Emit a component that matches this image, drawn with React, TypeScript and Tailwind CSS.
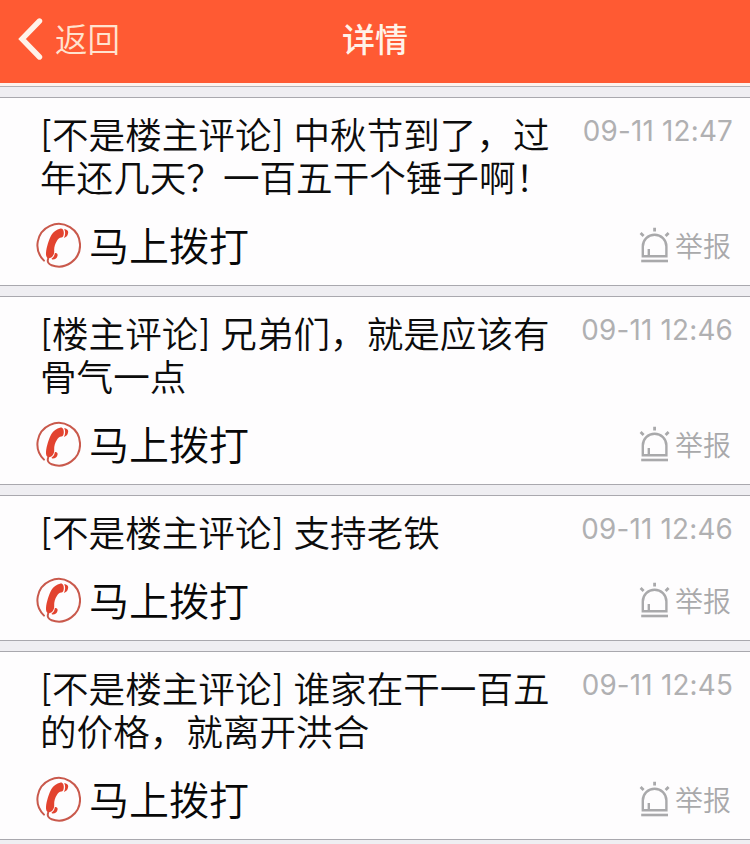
type Comment = { id: number; author: string; lines: string[]; time: string };

const comments: Comment[] = [
  { id: 1, author: '不是楼主评论', lines: ['中秋节到了，过', '年还几天？一百五干个锤子啊！'], time: '09-11 12:47' },
  { id: 2, author: '楼主评论', lines: ['兄弟们，就是应该有', '骨气一点'], time: '09-11 12:46' },
  { id: 3, author: '不是楼主评论', lines: ['支持老铁'], time: '09-11 12:46' },
  { id: 4, author: '不是楼主评论', lines: ['谁家在干一百五', '的价格，就离开洪合'], time: '09-11 12:45' },
];

function PhoneIcon() {
  return (
    <svg width="46" height="46" viewBox="0 0 46 46" fill="none">
      <path d="M9 38.6A21.3 21.3 0 1 1 16.6 43.3C13.4 42.2 12 39.6 13.2 36.6" stroke="#c9594c" strokeWidth="2" strokeLinecap="round" />
      <path
        d="M25.6 6.4C21.4 7.4 18.4 9.6 16.4 13C14 17.4 11.6 24.6 11 31C10.8 33.6 11.6 35.8 13 36.2C14.6 36.4 16.4 35.8 17.4 34.6C18.8 32.8 19.4 30.6 19.2 28.4C19 25.4 20 21.8 22 18.8C23 17.2 24.4 15.8 26.4 15.6C27.8 15.6 28.6 14 28.8 11.6C29 8.8 28 6.2 25.6 6.4Z"
        fill="#e2432f"
      />
      <path d="M29.2 7C31.8 7.2 33.4 8.8 33.2 10.6C33 13.2 31.8 15.2 29 16C30.4 12.8 30.6 9.8 29.2 7Z" fill="#e2432f" />
      <path d="M19.8 31.2C21.6 30.8 22.8 31.8 22.6 33.4C22.2 36 20 37.6 17.4 37.4C16.6 37.3 16.4 36.6 17 36.2C18.6 35.2 19.6 33.4 19.8 31.2Z" fill="#e2432f" />
    </svg>
  );
}

function AlarmIcon() {
  return (
    <svg width="32" height="36" viewBox="0 0 32 36" fill="none" stroke="#a9a9ab" strokeWidth="2.4">
      <path d="M4.8 29.2V19.4A11.8 11.6 0 0 1 28.4 19.4V29.2Z" />
      <path d="M10.8 28.5V22" />
      <path d="M3.2 34H30" strokeWidth="2.6" />
      <path d="M16.6 0.8V4.4M2.6 6L5.6 9M30.6 6L27.6 9" strokeWidth="2.8" />
    </svg>
  );
}

function Bracket({ children }: { children: string }) {
  return (
    <span className="inline-block w-[12px] align-[2px] font-['Inter',sans-serif] text-[36px] leading-none font-[350]">
      {children}
    </span>
  );
}

function CommentCard({ comment }: { comment: Comment }) {
  return (
    <article className="border-y border-[#a9a8ae] bg-[#fefdfe]">
      <div className="flex items-start justify-between pt-[14px] pr-[17px] pl-[40px]">
        <h2 className="text-[36.6px] font-[350] whitespace-pre text-[#0c0c0c]">
          {comment.lines.map((line, i) => (
            <span key={line} className="block h-[43px] leading-[43px]">
              {i === 0 && (
                <span className="mr-[10px]">
                  <Bracket>[</Bracket>
                  {comment.author}
                  <Bracket>]</Bracket>
                </span>
              )}
              {line}
            </span>
          ))}
        </h2>
        <time className="pt-[3px] font-['Inter','Liberation_Sans',sans-serif] text-[27.8px] leading-[32px] font-normal tracking-[0.2px] whitespace-nowrap text-[#b0b0b2]">
          {comment.time}
        </time>
      </div>
      <div className="mt-[24px] flex h-[63px] items-start justify-between pr-[19px] pl-[35px]">
        <button className="flex items-center gap-[8px] text-[40px] leading-[44px] font-[350] text-[#080808]">
          <PhoneIcon />
          <span className="pb-[2px]">马上拨打</span>
        </button>
        <button className="mt-[5px] flex items-center gap-[5px] text-[28px] leading-[36px] font-[350] text-[#a9a9ab]">
          <AlarmIcon />
          <span>举报</span>
        </button>
      </div>
    </article>
  );
}

export default function App() {
  return (
    <div className="h-[844px] w-[750px] overflow-hidden bg-[#efeef2] font-['Noto_Sans_CJK_SC',sans-serif]">
      <header className="grid h-[83px] grid-cols-3 items-center bg-[#ff5a33] pb-[6px]">
        <button className="flex items-center gap-[12px] pl-[18px] text-[32.5px] leading-[42px] font-[350] text-[#ffe3cf]">
          <svg width="25" height="42" viewBox="0 0 25 42" fill="none" stroke="#fff3e9" strokeWidth="5.4" strokeLinecap="round" strokeLinejoin="miter">
            <path d="M21.5 3L4 21L21.5 39" />
          </svg>
          <span className="pb-[2px]">返回</span>
        </button>
        <h1 className="pb-[2px] text-center text-[33px] leading-[42px] font-medium text-[#fff3e9]">详情</h1>
      </header>
      <div className="h-[4px] border-b border-[#b3b1b5] bg-[#fdf3ee]" />
      <main className="flex flex-col gap-[10px] pt-[10px]">
        {comments.map((comment) => (
          <CommentCard key={comment.id} comment={comment} />
        ))}
      </main>
    </div>
  );
}
